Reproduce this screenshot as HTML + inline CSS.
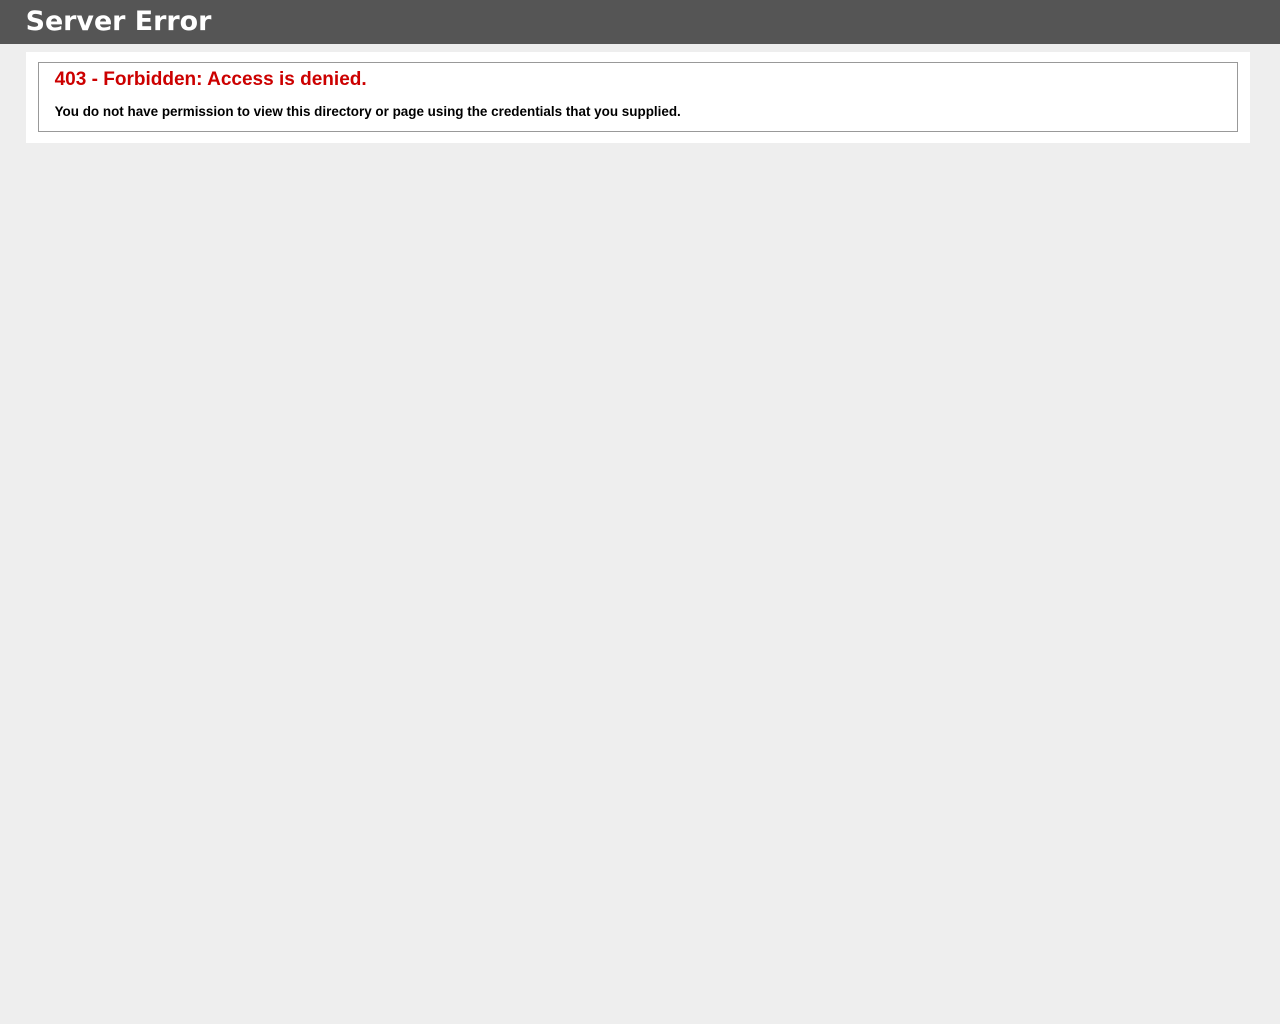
<!DOCTYPE html>
<html><head><meta charset="utf-8"><title>403 - Forbidden: Access is denied.</title>
<style>
body{margin:0;font-size:.7em;font-family:"Liberation Sans",Arial,sans-serif;background:#EEEEEE;}
fieldset{padding:6px 15px 12px 16px;border:1px solid #999;margin:0 2px;}
h1{font-size:2.4em;margin:0;color:#FFF;font-family:"DejaVu Sans",sans-serif;font-weight:bold;line-height:32px;}
h2{font-size:1.7em;margin:0;color:#CC0000;}
h3{font-size:1.2em;margin:13px 0 0 0;color:#000000;}
#header{width:96%;margin:0;padding:6px 2% 6px 2%;color:#FFF;background-color:#555555;}
#content{margin:0 0 0 2%;position:relative;}
.content-container{background:#FFF;width:96%;margin-top:8px;padding:10px 10px 11px 10px;position:relative;}
</style></head>
<body>
<div id="header"><h1>Server Error</h1></div>
<div id="content">
<div class="content-container"><fieldset>
<h2>403 - Forbidden: Access is denied.</h2>
<h3>You do not have permission to view this directory or page using the credentials that you supplied.</h3>
</fieldset></div>
</div>
</body></html>
